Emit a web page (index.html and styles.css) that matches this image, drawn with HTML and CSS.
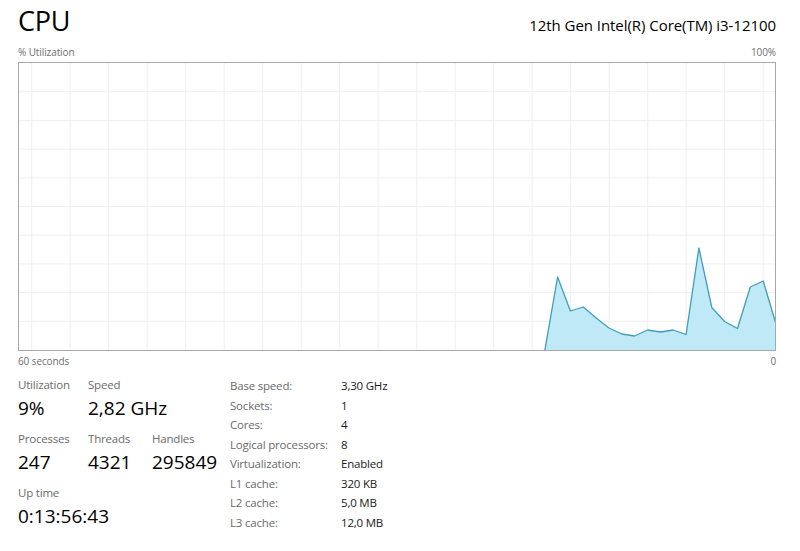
FILE: index.html
```html
<!DOCTYPE html>
<html lang="en">
<head>
<meta charset="utf-8">
<title>CPU</title>
<link rel="stylesheet" href="styles.css">
</head>
<body>
<main class="page">
  <header class="header">
    <h1 class="title">CPU</h1>
    <div class="model">12th Gen Intel(R) Core(TM) i3-12100</div>
  </header>
  <div class="axis-row axis-top">
    <span>% Utilization</span>
    <span>100%</span>
  </div>
  <div class="graph">
    <svg class="graph-svg" viewBox="0 0 756 287" width="756" height="287" preserveAspectRatio="none">
      <path class="grid" d="M12.7 0V287M51.2 0V287M89.7 0V287M128.2 0V287M166.7 0V287M205.2 0V287M243.7 0V287M282.2 0V287M320.7 0V287M359.2 0V287M397.7 0V287M436.2 0V287M474.7 0V287M513.2 0V287M551.7 0V287M590.2 0V287M628.7 0V287M667.2 0V287M705.7 0V287M744.2 0V287M0 28.7H756M0 57.4H756M0 86.1H756M0 114.8H756M0 143.5H756M0 172.2H756M0 200.9H756M0 229.6H756M0 258.3H756"/>
      <polygon class="area" points="525.7,288 538.6,214 551.4,248 564.3,244 577.1,255 590,265 602.8,271 615.7,273 628.5,267 641.4,269 654.2,267 667.1,271.5 679.9,185 692.8,244.5 705.6,258.5 718.5,265.5 731.3,224 744.2,218 757,261 757,288"/>
      <polyline class="line" points="525.7,288 538.6,214 551.4,248 564.3,244 577.1,255 590,265 602.8,271 615.7,273 628.5,267 641.4,269 654.2,267 667.1,271.5 679.9,185 692.8,244.5 705.6,258.5 718.5,265.5 731.3,224 744.2,218 757,261"/>
    </svg>
  </div>
  <div class="axis-row axis-bottom">
    <span>60 seconds</span>
    <span>0</span>
  </div>
  <section class="details">
    <div class="stats">
      <div class="stat">
        <div class="stat-label">Utilization</div>
        <div class="stat-value">9%</div>
      </div>
      <div class="stat stat-wide2">
        <div class="stat-label">Speed</div>
        <div class="stat-value">2,82 GHz</div>
      </div>
      <div class="stat">
        <div class="stat-label">Processes</div>
        <div class="stat-value">247</div>
      </div>
      <div class="stat">
        <div class="stat-label">Threads</div>
        <div class="stat-value">4321</div>
      </div>
      <div class="stat">
        <div class="stat-label">Handles</div>
        <div class="stat-value">295849</div>
      </div>
      <div class="stat stat-wide3">
        <div class="stat-label">Up time</div>
        <div class="stat-value">0:13:56:43</div>
      </div>
    </div>
    <dl class="specs">
      <dt>Base speed:</dt><dd>3,30 GHz</dd>
      <dt>Sockets:</dt><dd>1</dd>
      <dt>Cores:</dt><dd>4</dd>
      <dt>Logical processors:</dt><dd>8</dd>
      <dt>Virtualization:</dt><dd>Enabled</dd>
      <dt>L1 cache:</dt><dd>320 KB</dd>
      <dt>L2 cache:</dt><dd>5,0 MB</dd>
      <dt>L3 cache:</dt><dd>12,0 MB</dd>
    </dl>
  </section>
</main>
</body>
</html>
```

FILE: styles.css
```css
* { box-sizing: border-box; }

html, body {
  margin: 0;
  padding: 0;
  background: #ffffff;
}

body {
  font-family: "Open Sans", "Noto Sans", "Liberation Sans", sans-serif;
  color: #000000;
}

.page {
  width: 800px;
  padding: 3px 24px 0 18px;
}

.header {
  display: flex;
  justify-content: space-between;
  align-items: baseline;
  height: 39px;
}

.title {
  margin: 0;
  font-size: 27px;
  font-weight: 400;
  line-height: 36px;
  letter-spacing: -0.3px;
  color: #000;
}

.model {
  font-size: 15px;
  line-height: 20px;
  letter-spacing: -0.05px;
  color: #000;
}

.axis-row {
  display: flex;
  justify-content: space-between;
  font-size: 10px;
  line-height: 14px;
  letter-spacing: -0.1px;
  color: #707070;
}

.axis-top {
  margin-top: 3px;
  margin-bottom: 3px;
}

.axis-bottom {
  margin-top: 3px;
}

.graph {
  width: 758px;
  height: 289px;
  border: 1px solid #a8a8a8;
  background: #fff;
  overflow: hidden;
}

.graph-svg {
  display: block;
}

.grid {
  stroke: #efefef;
  stroke-width: 1;
  fill: none;
}

.area {
  fill: #bfe9f7;
  stroke: none;
}

.line {
  fill: none;
  stroke: #3f9fb8;
  stroke-width: 1.3;
  stroke-linejoin: round;
}

.details {
  display: flex;
  margin-top: 8px;
}

.stats {
  width: 212px;
  display: grid;
  grid-template-columns: 70px 64px 1fr;
  row-gap: 11px;
  align-content: start;
  padding-top: 1px;
}

.stat-wide2 { grid-column: span 2; }
.stat-wide3 { grid-column: span 3; }

.stat-label {
  font-size: 11.5px;
  line-height: 16px;
  letter-spacing: -0.2px;
  color: #6b6b6b;
}

.stat-value {
  margin-top: 3px;
  font-size: 19px;
  line-height: 24px;
  color: #000;
}

.specs {
  margin: 0;
  display: grid;
  grid-template-columns: 111px auto;
  font-size: 11.5px;
  line-height: 19.5px;
  letter-spacing: -0.2px;
}

.specs dt {
  color: #6b6b6b;
}

.specs dd {
  margin: 0;
  color: #1a1a1a;
}
```
